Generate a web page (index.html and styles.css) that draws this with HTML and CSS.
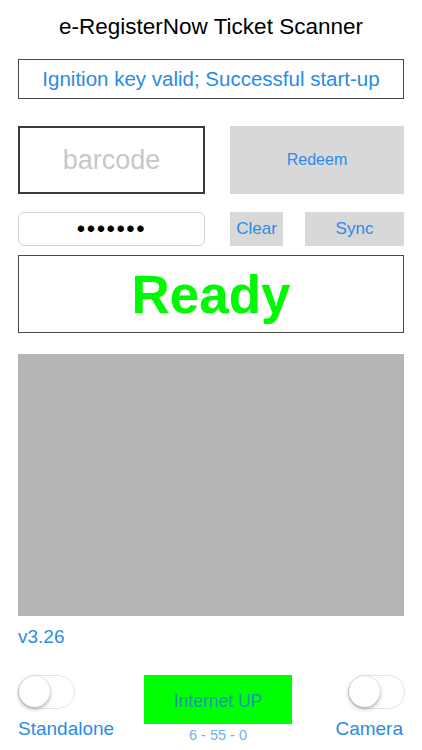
FILE: index.html
```html
<!DOCTYPE html>
<html>
<head>
<meta charset="utf-8">
<link rel="stylesheet" href="styles.css">
</head>
<body>
<div class="app">
  <h1 class="title">e-RegisterNow Ticket Scanner</h1>
  <div class="status">Ignition key valid; Successful start-up</div>
  <div class="row row-main">
    <div class="barcode">barcode</div>
    <div class="btn redeem">Redeem</div>
  </div>
  <div class="row row-sub">
    <div class="password">&#8226;&#8226;&#8226;&#8226;&#8226;&#8226;&#8226;</div>
    <div class="btn clear">Clear</div>
    <div class="btn sync">Sync</div>
  </div>
  <div class="ready">Ready</div>
  <div class="camera-view"></div>
  <div class="version">v3.26</div>
  <div class="bottom">
    <div class="side side-left">
      <div class="switch"><div class="knob"></div></div>
      <div class="side-label">Standalone</div>
    </div>
    <div class="center">
      <div class="internet">Internet UP</div>
      <div class="counts">6 - 55 - 0</div>
    </div>
    <div class="side side-right">
      <div class="switch"><div class="knob"></div></div>
      <div class="side-label">Camera</div>
    </div>
  </div>
</div>
</body>
</html>
```
FILE: styles.css
```css
* { box-sizing: border-box; }
html, body {
  margin: 0;
  padding: 0;
  background: #ffffff;
  font-family: "Liberation Sans", Arial, sans-serif;
}
.app {
  width: 422px;
  height: 750px;
  padding: 0 18px;
  display: flex;
  flex-direction: column;
}
.title {
  margin: 0;
  height: 59px;
  padding-top: 14px;
  font-size: 22.5px;
  font-weight: normal;
  line-height: 26px;
  text-align: center;
  color: #000;
}
.status {
  height: 40px;
  border: 1.5px solid #4a4a4a;
  color: #2a8be6;
  font-size: 20.5px;
  display: flex;
  align-items: center;
  justify-content: center;
}
.row {
  display: flex;
}
.row-main {
  margin-top: 27px;
  height: 68px;
}
.barcode {
  width: 187px;
  border: 2px solid #3a3a3a;
  color: #c7c7cd;
  font-size: 27px;
  display: flex;
  align-items: center;
  justify-content: center;
}
.btn {
  background: #d8d8d8;
  color: #2a8be6;
  display: flex;
  align-items: center;
  justify-content: center;
}
.redeem {
  margin-left: 25px;
  width: 174px;
  font-size: 16px;
}
.row-sub {
  margin-top: 18px;
  height: 34px;
}
.password {
  width: 187px;
  border: 1px solid #d4d4d4;
  border-radius: 6px;
  font-size: 24px;
  letter-spacing: 1.5px;
  color: #000;
  display: flex;
  align-items: center;
  justify-content: center;
}
.clear {
  margin-left: 25px;
  width: 53px;
  font-size: 17px;
}
.sync {
  margin-left: 22px;
  width: 99px;
  font-size: 17px;
}
.ready {
  margin-top: 9px;
  height: 78px;
  border: 1.5px solid #4a4a4a;
  color: #00f800;
  font-size: 53px;
  font-weight: bold;
  display: flex;
  align-items: center;
  justify-content: center;
}
.camera-view {
  margin-top: 21px;
  height: 262px;
  background: #b5b5b5;
}
.version {
  margin-top: 10px;
  height: 22px;
  font-size: 19px;
  line-height: 22px;
  color: #2a8be6;
}
.bottom {
  margin-top: 27px;
  display: flex;
}
.side {
  display: flex;
  flex-direction: column;
}
.side-left {
  width: 126px;
  align-items: flex-start;
}
.side-right {
  flex: 1;
  align-items: flex-end;
  margin-right: -1px;
}
.switch {
  width: 57px;
  height: 34px;
  border: 1.5px solid #e4e4e4;
  border-radius: 17px;
  background: #fff;
  position: relative;
}
.knob {
  position: absolute;
  left: 0;
  top: 0;
  width: 31px;
  height: 31px;
  border-radius: 50%;
  background: #fff;
  box-shadow: 0 2px 4px rgba(0,0,0,0.3), 0 0 1px rgba(0,0,0,0.25);
}
.side-label {
  margin-top: 9px;
  font-size: 19px;
  line-height: 22px;
  color: #2a8be6;
}
.side-right .side-label {
  margin-right: 2px;
}
.center {
  width: 148px;
  display: flex;
  flex-direction: column;
  align-items: center;
}
.internet {
  width: 148px;
  height: 49px;
  padding-top: 3px;
  background: #00ff00;
  color: #1e94b8;
  font-size: 17.5px;
  display: flex;
  align-items: center;
  justify-content: center;
}
.counts {
  margin-top: 3px;
  font-size: 14.5px;
  line-height: 16px;
  color: #6cb2f0;
}
```
